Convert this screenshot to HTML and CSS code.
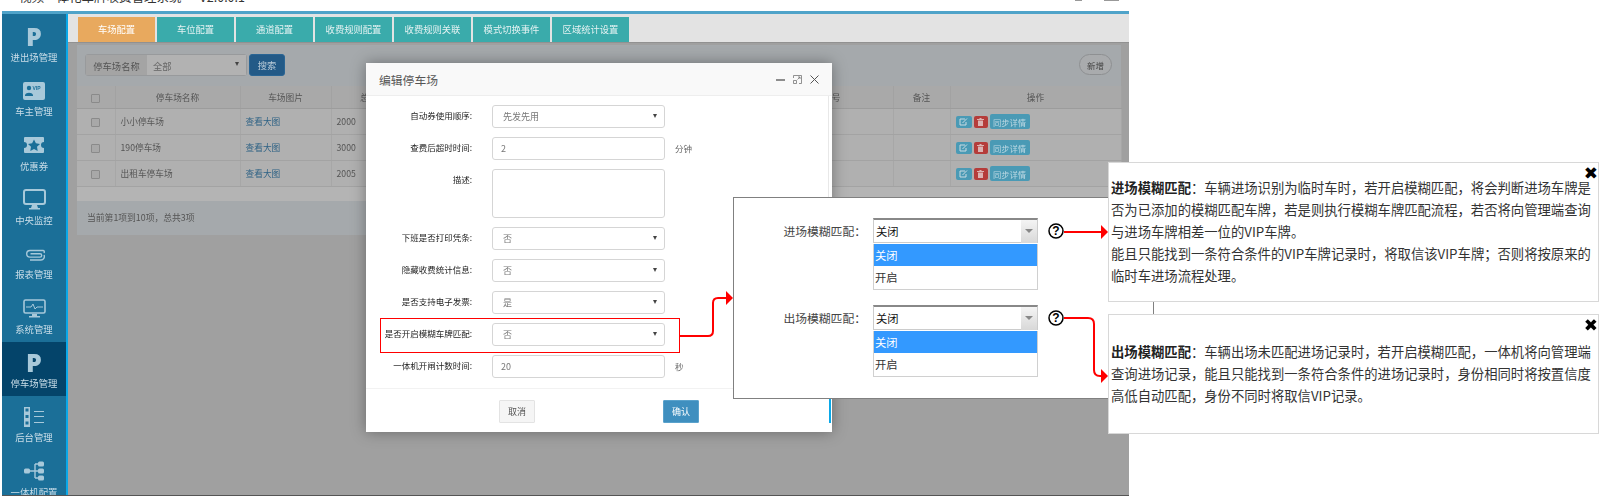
FILE: index.html
```html
<!DOCTYPE html>
<html lang="zh-CN">

<head>
    <meta charset="UTF-8">
    <title>停车场管理</title>
    <link rel="stylesheet" href="styles.css">
</head>

<body>
    <div class="title-strip">
        <span class="title-text">视频一体化车牌收费管理系统 — V2.0.0.1</span>
        <span class="title-btn title-btn-a"></span>
        <span class="title-btn title-btn-b"></span>
    </div>

    <div class="app">
        <nav class="sidebar">
            <a class="nav-item"><span class="nav-icon"><span class="nav-p">P</span></span><span>进出场管理</span></a>
            <a class="nav-item">
                <span class="nav-icon">
                    <svg width="22" height="18" viewBox="0 0 22 18">
                        <rect width="22" height="18" rx="2" fill="#a8c9da"/>
                        <circle cx="6" cy="6" r="2.2" fill="#1b6f98"/>
                        <path d="M2 13c1-3 7-3 8 0v1H2z" fill="#1b6f98"/>
                        <text x="9.5" y="8" class="vip-text">VIP</text>
                    </svg>
                </span>
                <span>车主管理</span>
            </a>
            <a class="nav-item">
                <span class="nav-icon">
                    <svg width="22" height="18" viewBox="0 0 22 18">
                        <path d="M2 1h18a1 1 0 0 1 1 1v4a3 3 0 0 0 0 6v4a1 1 0 0 1-1 1H2a1 1 0 0 1-1-1v-4a3 3 0 0 0 0-6V2a1 1 0 0 1 1-1z" fill="#a8c9da"/>
                        <path d="M11 3.5l1.9 3.8 4.1.6-3 2.9.7 4.1-3.7-2-3.7 2 .7-4.1-3-2.9 4.1-.6z" fill="#1b6f98"/>
                    </svg>
                </span>
                <span>优惠券</span>
            </a>
            <a class="nav-item">
                <span class="nav-icon">
                    <svg width="23" height="21" viewBox="0 0 23 21">
                        <rect x="1" y="1" width="21" height="14" rx="2" fill="none" stroke="#a8c9da" stroke-width="2"/>
                        <path d="M9 16h5l1 3h2v1.500H6V19h2z" fill="#a8c9da"/>
                    </svg>
                </span>
                <span>中央监控</span>
            </a>
            <a class="nav-item">
                <span class="nav-icon">
                    <svg width="22" height="14" viewBox="0 0 22 14">
                        <path d="M20 3.500H7a3.300 3.300 0 0 0 0 6.600h10a1.700 1.700 0 0 0 0-3.400H7.500M20 3.500c1.500 0 1.500 1.500 1 2.500M7 13h11a3.500 3.500 0 0 0 3-5" fill="none" stroke="#a8c9da" stroke-width="1.400"/>
                    </svg>
                </span>
                <span>报表管理</span>
            </a>
            <a class="nav-item">
                <span class="nav-icon">
                    <svg width="23" height="19" viewBox="0 0 23 19">
                        <rect x="1" y="1" width="21" height="13" rx="1.500" fill="none" stroke="#a8c9da" stroke-width="1.600"/>
                        <path d="M3 8h5l2-3 2 5 2-2h6" fill="none" stroke="#a8c9da"/>
                        <path d="M9 15h5v2h3v1.500H6V17h3z" fill="#a8c9da"/>
                    </svg>
                </span>
                <span>系统管理</span>
            </a>
            <a class="nav-item nav-active"><span class="nav-icon"><span class="nav-p">P</span></span><span>停车场管理</span></a>
            <a class="nav-item">
                <span class="nav-icon">
                    <svg width="20" height="20" viewBox="0 0 20 20">
                        <path d="M0 0h6v20H0z" fill="#a8c9da"/>
                        <path d="M1.500 1.500h3v3h-3zM1.500 8h3v3h-3zM1.500 14.500h3v3h-3z" fill="#1b6f98"/>
                        <path d="M10 4.500h10M10 9.500h10M10 15.500h10" stroke="#a8c9da" stroke-width="1"/>
                    </svg>
                </span>
                <span>后台管理</span>
            </a>
            <a class="nav-item">
                <span class="nav-icon">
                    <svg width="20" height="20" viewBox="0 0 20 20">
                        <path d="M4 10h7M11 3v14M11 3h3M11 10h3M11 17h3" stroke="#a8c9da" stroke-width="1.400" fill="none"/>
                        <rect y="7.500" width="6" height="5" rx="1.500" fill="#a8c9da"/>
                        <rect x="14" y="0.500" width="6" height="5" rx="1.500" fill="#a8c9da"/>
                        <rect x="14" y="7.500" width="6" height="5" rx="1.500" fill="#a8c9da"/>
                        <rect x="14" y="14.500" width="6" height="5" rx="1.500" fill="#a8c9da"/>
                    </svg>
                </span>
                <span>一体机配置</span>
            </a>
        </nav>

        <div class="main">
            <div class="tabs">
                <a class="tab tab-active">车场配置</a>
                <a class="tab">车位配置</a>
                <a class="tab">通道配置</a>
                <a class="tab">收费规则配置</a>
                <a class="tab">收费规则关联</a>
                <a class="tab">模式切换事件</a>
                <a class="tab">区域统计设置</a>
            </div>

            <div class="content">
                <div class="panel">
                    <div class="search-row">
                        <div class="search-group">
                            <span class="search-label">停车场名称</span>
                            <span class="search-select">全部<i class="caret"></i></span>
                        </div>
                        <button class="btn-search">搜索</button>
                        <button class="btn-add">新增</button>
                    </div>

                    <table class="grid">
                        <colgroup>
                            <col class="c-check">
                            <col class="c-name">
                            <col class="c-pic">
                            <col class="c-total">
                            <col class="c-wide">
                            <col class="c-code">
                            <col class="c-note">
                            <col class="c-ops">
                        </colgroup>
                        <thead>
                            <tr>
                                <th><i class="check"></i></th>
                                <th>停车场名称</th>
                                <th>车场图片</th>
                                <th>总车位</th>
                                <th></th>
                                <th>车场编号</th>
                                <th>备注</th>
                                <th>操作</th>
                            </tr>
                        </thead>
                        <tbody>
                            <tr>
                                <td class="center"><i class="check"></i></td>
                                <td>小小停车场</td>
                                <td><a class="link">查看大图</a></td>
                                <td>2000</td>
                                <td></td>
                                <td></td>
                                <td></td>
                                <td>
                                    <div class="ops">
                                        <span class="op op-edit"><svg width="9" height="8" viewBox="0 0 9 8"><path d="M6 1H1v6h6V4M3.500 5L8 .5" fill="none" stroke="#c9dbe2"/></svg></span>
                                        <span class="op op-del"><svg width="7" height="8" viewBox="0 0 7 8"><path d="M0 1h7v1H0zM1 2.500h5V8H1zM2.500 0h2v1h-2z" fill="#dbb3b2"/></svg></span>
                                        <span class="op op-sync">同步详情</span>
                                    </div>
                                </td>
                            </tr>
                            <tr>
                                <td class="center"><i class="check"></i></td>
                                <td>190停车场</td>
                                <td><a class="link">查看大图</a></td>
                                <td>3000</td>
                                <td></td>
                                <td></td>
                                <td></td>
                                <td>
                                    <div class="ops">
                                        <span class="op op-edit"><svg width="9" height="8" viewBox="0 0 9 8"><path d="M6 1H1v6h6V4M3.500 5L8 .5" fill="none" stroke="#c9dbe2"/></svg></span>
                                        <span class="op op-del"><svg width="7" height="8" viewBox="0 0 7 8"><path d="M0 1h7v1H0zM1 2.500h5V8H1zM2.500 0h2v1h-2z" fill="#dbb3b2"/></svg></span>
                                        <span class="op op-sync">同步详情</span>
                                    </div>
                                </td>
                            </tr>
                            <tr>
                                <td class="center"><i class="check"></i></td>
                                <td>出租车停车场</td>
                                <td><a class="link">查看大图</a></td>
                                <td>2005</td>
                                <td></td>
                                <td></td>
                                <td></td>
                                <td>
                                    <div class="ops">
                                        <span class="op op-edit"><svg width="9" height="8" viewBox="0 0 9 8"><path d="M6 1H1v6h6V4M3.500 5L8 .5" fill="none" stroke="#c9dbe2"/></svg></span>
                                        <span class="op op-del"><svg width="7" height="8" viewBox="0 0 7 8"><path d="M0 1h7v1H0zM1 2.500h5V8H1zM2.500 0h2v1h-2z" fill="#dbb3b2"/></svg></span>
                                        <span class="op op-sync">同步详情</span>
                                    </div>
                                </td>
                            </tr>
                        </tbody>
                    </table>

                    <div class="grid-spacer"></div>
                    <div class="grid-info">当前第1项到10项，总共3项</div>
                </div>
            </div>
        </div>
    </div>

    <!-- edit dialog -->
    <div class="modal">
        <div class="modal-head">
            <span class="modal-title">编辑停车场</span>
            <span class="modal-tools">
                <svg width="9" height="9" viewBox="0 0 9 9"><path d="M0 5h9" stroke="#444" stroke-width="1.200"/></svg>
                <svg width="9" height="9" viewBox="0 0 9 9"><path d="M.5 3V.5h8v8H6M.5 5.500h3v3h-3zM4.500 4.500L7 2M5 2h2v2" fill="none" stroke="#777" stroke-width=".8"/></svg>
                <svg width="9" height="9" viewBox="0 0 9 9"><path d="M.5.500l8 8M8.500.500l-8 8" stroke="#555"/></svg>
            </span>
        </div>
        <div class="modal-body">
            <div class="form-row"><label>自动券使用顺序:</label><span class="field">先发先用<i class="caret"></i></span></div>
            <div class="form-row"><label>查费后超时时间:</label><span class="field field-input">2</span><span class="unit">分钟</span></div>
            <div class="form-row"><label>描述:</label><span class="field field-area"></span></div>
            <div class="form-row"><label>下班是否打印凭条:</label><span class="field">否<i class="caret"></i></span></div>
            <div class="form-row"><label>隐藏收费统计信息:</label><span class="field">否<i class="caret"></i></span></div>
            <div class="form-row"><label>是否支持电子发票:</label><span class="field">是<i class="caret"></i></span></div>
            <div class="form-row"><label>是否开启模糊车牌匹配:</label><span class="field">否<i class="caret"></i></span></div>
            <div class="form-row"><label>一体机开闸计数时间:</label><span class="field field-input">20</span><span class="unit">秒</span></div>
        </div>
        <div class="modal-foot">
            <button class="btn-cancel">取消</button>
            <button class="btn-ok">确认</button>
        </div>
    </div>
    <div class="modal-edge"></div>
    <div class="red-box"></div>

    <!-- fuzzy match options -->
    <div class="options">
        <div class="option-row">
            <span class="option-label">进场模糊匹配：</span>
            <div class="combo">
                <div class="combo-head">关闭<i class="combo-arrow"></i></div>
                <div class="combo-list">
                    <div class="combo-item combo-selected">关闭</div>
                    <div class="combo-item">开启</div>
                </div>
            </div>
            <svg class="help" width="16" height="16" viewBox="0 0 16 16"><circle cx="8" cy="8" r="7" fill="#fff" stroke="#000" stroke-width="1.500"/><text x="8" y="12" class="help-text">?</text></svg>
        </div>
        <div class="option-row">
            <span class="option-label">出场模糊匹配：</span>
            <div class="combo">
                <div class="combo-head">关闭<i class="combo-arrow"></i></div>
                <div class="combo-list">
                    <div class="combo-item combo-selected">关闭</div>
                    <div class="combo-item">开启</div>
                </div>
            </div>
            <svg class="help" width="16" height="16" viewBox="0 0 16 16"><circle cx="8" cy="8" r="7" fill="#fff" stroke="#000" stroke-width="1.500"/><text x="8" y="12" class="help-text">?</text></svg>
        </div>
    </div>

    <div class="note note-in">
        <span class="note-close">✖</span>
        <b>进场模糊匹配</b>：车辆进场识别为临时车时，若开启模糊匹配，将会判断进场车牌是<br>
        否为已添加的模糊匹配车牌，若是则执行模糊车牌匹配流程，若否将向管理端查询<br>
        与进场车牌相差一位的VIP车牌。<br>
        能且只能找到一条符合条件的VIP车牌记录时，将取信该VIP车牌；否则将按原来的<br>
        临时车进场流程处理。
    </div>

    <div class="note note-out">
        <span class="note-close">✖</span>
        <b>出场模糊匹配</b>：车辆出场未匹配进场记录时，若开启模糊匹配，一体机将向管理端<br>
        查询进场记录，能且只能找到一条符合条件的进场记录时，身份相同时将按置信度<br>
        高低自动匹配，身份不同时将取信VIP记录。
    </div>

    <svg class="arrows" width="1599" height="503" viewBox="0 0 1599 503">
        <path d="M680 336H708Q713 336 713 331V303Q713 298 718 298H727" class="wire"/>
        <path d="M726 291L733 298L726 305z" fill="#f00"/>
        <path d="M1064 232H1102" class="wire"/>
        <path d="M1101 225L1108 232L1101 239z" fill="#f00"/>
        <path d="M1064 318H1088Q1094 318 1094 324V370Q1094 376 1100 376H1102" class="wire"/>
        <path d="M1101 369L1108 376L1101 383z" fill="#f00"/>
    </svg>
</body>

</html>
```

FILE: styles.css
```css
body {
    font-family: "Noto Sans CJK SC", "Liberation Sans", sans-serif;
    background-color: #fff;
    margin: 0;
    padding: 0;
    position: relative;
    width: 1599px;
    height: 503px;
    overflow: hidden;
}

/* clipped window title */
.title-strip {
    height: 3px;
    margin-bottom: 8px;
    overflow: hidden;
    display: flex;
    padding-left: 19px;
}

.title-text {
    font-size: 12.5px;
    line-height: 12px;
    margin-top: -9px;
    color: #333;
    width: 1056px;
    white-space: nowrap;
}

.title-btn {
    height: 1px;
    background-color: #999;
}

.title-btn-a {
    width: 7px;
}

.title-btn-b {
    width: 15px;
    margin-left: 22px;
}

.app {
    margin-left: 2px;
    width: 1127px;
    height: 485px;
    box-sizing: border-box;
    border-top: 3px solid #4fa3c9;
    border-bottom: 1px solid #555;
    display: flex;
    overflow: hidden;
    filter: blur(0.3px);
}

.sidebar {
    width: 64px;
    flex-shrink: 0;
    padding-top: 2px;
    background-color: #1b6f98;
    border-right: 2px solid #0aa8e8;
}

.nav-item {
    display: flex;
    flex-direction: column;
    align-items: center;
    height: 54.33px;
    padding-top: 7px;
    box-sizing: border-box;
    font-size: 9.4px;
    line-height: 14px;
    color: #c9dde8;
    white-space: nowrap;
}

.nav-active {
    background-color: #04446a;
}

.nav-icon {
    height: 27px;
    display: flex;
    align-items: center;
    justify-content: center;
}

.nav-p {
    font-family: "Open Sans", sans-serif;
    font-weight: 800;
    font-size: 25px;
    line-height: 27px;
    color: #a8c9da;
}

.vip-text {
    font-family: "Liberation Sans", sans-serif;
    font-size: 5px;
    font-weight: 700;
    fill: #1b6f98;
}

.main {
    flex: 1;
    display: flex;
    flex-direction: column;
    min-width: 0;
}

.tabs {
    display: flex;
    gap: 2px;
    height: 28px;
    box-sizing: border-box;
    padding: 3px 0 0 10px;
    background-color: #e3e3e3;
}

.tab {
    width: 77px;
    height: 25px;
    line-height: 25px;
    text-align: center;
    font-size: 9.3px;
    color: #e4f2f2;
    background-color: #3aabab;
}

.tab-active {
    color: #fff;
    background-color: #e8a95e;
}

.content {
    flex: 1;
    padding: 2px 8px 0 9px;
    background-color: #a0a0a0;
    border-top: 1px solid #919191;
    margin-top: 0;
}

.panel {
    background-color: #a5a9ac;
}

.search-row {
    display: flex;
    align-items: center;
    height: 41px;
    padding: 0 9px 2px 8px;
    box-sizing: border-box;
}

.search-group {
    display: flex;
    width: 162px;
    height: 22px;
    font-size: 9.3px;
    line-height: 22px;
    color: #555;
    border: 1px solid #989a9c;
    border-radius: 3px;
    box-sizing: border-box;
}

.search-label {
    width: 61px;
    text-align: center;
    background-color: #a4a4a4;
}

.search-select {
    flex: 1;
    position: relative;
    padding-left: 6px;
    color: #666;
    background-color: #b2b2b2;
}

.caret {
    position: absolute;
    right: 7px;
    top: 50%;
    margin-top: -3px;
    border-left: 2.5px solid transparent;
    border-right: 2.5px solid transparent;
    border-top: 4px solid #444;
}

.btn-search {
    width: 36px;
    height: 22px;
    margin-left: 2px;
    padding: 0;
    font: inherit;
    font-size: 9.3px;
    color: #b9cbd8;
    background-color: #235a87;
    border: 1px solid #2a6594;
    border-radius: 3px;
}

.btn-add {
    width: 33px;
    height: 21px;
    margin-left: auto;
    padding: 0;
    font: inherit;
    font-size: 8.5px;
    color: #444;
    background-color: #a9abad;
    border: 1px solid #8e9092;
    border-radius: 11px;
}

.grid {
    width: 1044px;
    table-layout: fixed;
    border-collapse: collapse;
    font-size: 8.7px;
    color: #555;
}

.c-check {
    width: 38px;
}

.c-name {
    width: 125px;
}

.c-pic {
    width: 91px;
}

.c-total {
    width: 84px;
}

.c-wide {
    width: 338px;
}

.c-code {
    width: 140px;
}

.c-note {
    width: 57px;
}

.c-ops {
    width: 171px;
}

.grid th {
    height: 22px;
    padding: 0;
    font-weight: 400;
    text-align: center;
    color: #555;
    background-color: #a9a9a9;
    border-bottom: 1px solid #9c9c9c;
    border-right: 1px solid #a2a2a2;
}

.grid td {
    height: 25px;
    padding: 0 0 0 5px;
    background-color: #b0b0b0;
    border-bottom: 1px solid #a3a3a3;
    border-right: 1px solid #a7a7a7;
}

.grid td.center {
    padding: 0;
    text-align: center;
}

.check {
    display: inline-block;
    width: 7px;
    height: 7px;
    vertical-align: middle;
    background-color: #a8a8a8;
    border: 1px solid #8a8a8a;
    border-radius: 1px;
}

.link {
    color: #2e6285;
}

.ops {
    display: flex;
    align-items: center;
    gap: 2px;
    color: #fff;
}

.op {
    display: flex;
    align-items: center;
    justify-content: center;
    height: 12px;
    border-radius: 2px;
}

.op-edit {
    width: 16px;
    background-color: #4a9ab5;
}

.op-del {
    width: 14px;
    background-color: #b53c3a;
}

.op-sync {
    width: 40px;
    height: 15px;
    font-size: 8.3px;
    color: #bcd9e3;
    background-color: #4a9ab5;
}

.grid-spacer {
    height: 14px;
    background-color: #b4b4b4;
}

.grid-info {
    height: 34px;
    line-height: 34px;
    padding-left: 10px;
    font-size: 8.8px;
    color: #555;
}

/* dialog */
.modal {
    position: absolute;
    left: 366px;
    top: 63px;
    width: 466px;
    height: 369px;
    background-color: #fff;
    box-shadow: 0 0 14px rgba(0, 0, 0, 0.35);
    display: flex;
    flex-direction: column;
    filter: blur(0.25px);
}

.modal-head {
    height: 33px;
    flex-shrink: 0;
    box-sizing: border-box;
    display: flex;
    align-items: center;
    justify-content: space-between;
    padding: 0 13px;
    background-color: #f9f9f9;
    border-bottom: 1px solid #eee;
}

.modal-title {
    font-size: 11.8px;
    color: #555;
}

.modal-tools {
    display: flex;
    gap: 8px;
}

.modal-body {
    height: 293px;
    flex-shrink: 0;
    box-sizing: border-box;
    padding-top: 9px;
    display: flex;
    flex-direction: column;
    gap: 9px;
    border-bottom: 1px solid #f2f2f2;
    border-right: 1px solid #e8e8e8;
    margin-right: 3px;
}

.form-row {
    display: flex;
    align-items: flex-start;
    font-size: 8.5px;
    color: #222;
}

.form-row label {
    width: 106px;
    line-height: 20px;
    text-align: right;
    margin-right: 20px;
    white-space: nowrap;
}

.field {
    position: relative;
    width: 173px;
    height: 23px;
    box-sizing: border-box;
    line-height: 22px;
    padding-left: 10px;
    font-size: 9px;
    color: #777;
    background-color: #fff;
    border: 1px solid #d5d5d5;
    border-radius: 3px;
}

.field-input {
    padding-left: 8px;
}

.field-area {
    height: 49px;
}

.unit {
    margin-left: 10px;
    line-height: 22px;
    font-size: 8.5px;
    color: #666;
}

.modal-foot {
    display: flex;
    padding: 11px 0 0 133px;
    gap: 128px;
}

.btn-cancel,
.btn-ok {
    width: 36px;
    height: 23px;
    padding: 0;
    font: inherit;
    font-size: 9px;
    border-radius: 1px;
}

.btn-cancel {
    color: #555;
    background-color: #f5f5f5;
    border: 1px solid #e3e3e3;
}

.btn-ok {
    color: #fff;
    background-color: #3f8fbf;
    border: 1px solid #5aa2cc;
}

.modal-edge {
    position: absolute;
    left: 829px;
    top: 398px;
    width: 2px;
    height: 25px;
    background-color: #0aa8e8;
}

.red-box {
    position: absolute;
    left: 380px;
    top: 318px;
    width: 300px;
    height: 35px;
    box-sizing: border-box;
    border: 1px solid #f00;
}

/* fuzzy match options */
.options {
    position: absolute;
    left: 733px;
    top: 197px;
    width: 421px;
    height: 202px;
    box-sizing: border-box;
    padding-top: 20px;
    background-color: #fff;
    border: 1px solid #808080;
}

.option-row {
    display: flex;
    align-items: flex-start;
    height: 87px;
    font-size: 11.300px;
}

.option-label {
    width: 132px;
    line-height: 26px;
    margin-right: 7px;
    font-size: 11.8px;
    text-align: right;
    color: #444;
    white-space: nowrap;
}

.combo {
    width: 165px;
    color: #111;
}

.combo-head {
    position: relative;
    height: 25px;
    box-sizing: border-box;
    line-height: 23px;
    padding-left: 2px;
    background-color: #fff;
    border: 1px solid #ccc;
    border-top: 2px solid #888;
}

.combo-arrow {
    position: absolute;
    right: 0;
    top: 0;
    width: 16px;
    height: 23px;
    background: linear-gradient(#f4f4f4, #d8d8d8);
}

.combo-arrow::after {
    content: "";
    position: absolute;
    left: 4px;
    top: 9px;
    border-left: 4px solid transparent;
    border-right: 4px solid transparent;
    border-top: 4px solid #888;
}

.combo-list {
    box-sizing: border-box;
    border: 1px solid #d0d0d0;
    border-top: 0;
    margin-top: 1px;
}

.combo-item {
    height: 23px;
    line-height: 23px;
    padding-left: 1px;
    color: #333;
}

.combo-selected {
    height: 22px;
    line-height: 22px;
    color: #fff;
    background-color: #3399ff;
}

.help {
    margin: 5px 0 0 10px;
}

.help-text {
    font-family: "Liberation Sans", sans-serif;
    font-size: 12px;
    font-weight: 700;
    text-anchor: middle;
}

.note {
    position: absolute;
    left: 1108px;
    width: 491px;
    box-sizing: border-box;
    padding-left: 2px;
    font-size: 13.330px;
    line-height: 22px;
    color: #333;
    white-space: nowrap;
    background-color: #fff;
    border: 1px solid #d8d8d8;
}

.note b {
    color: #222;
}

.note-in {
    top: 162px;
    height: 140px;
    padding-top: 14px;
}

.note-out {
    top: 314px;
    height: 120px;
    padding-top: 26px;
}

.note-close {
    position: absolute;
    right: 0;
    top: 2px;
    font-family: "DejaVu Sans", sans-serif;
    font-size: 17px;
    line-height: 17px;
    color: #000;
}

.arrows {
    position: absolute;
    left: 0;
    top: 0;
    pointer-events: none;
}

.wire {
    fill: none;
    stroke: #f00;
    stroke-width: 2;
}
```
